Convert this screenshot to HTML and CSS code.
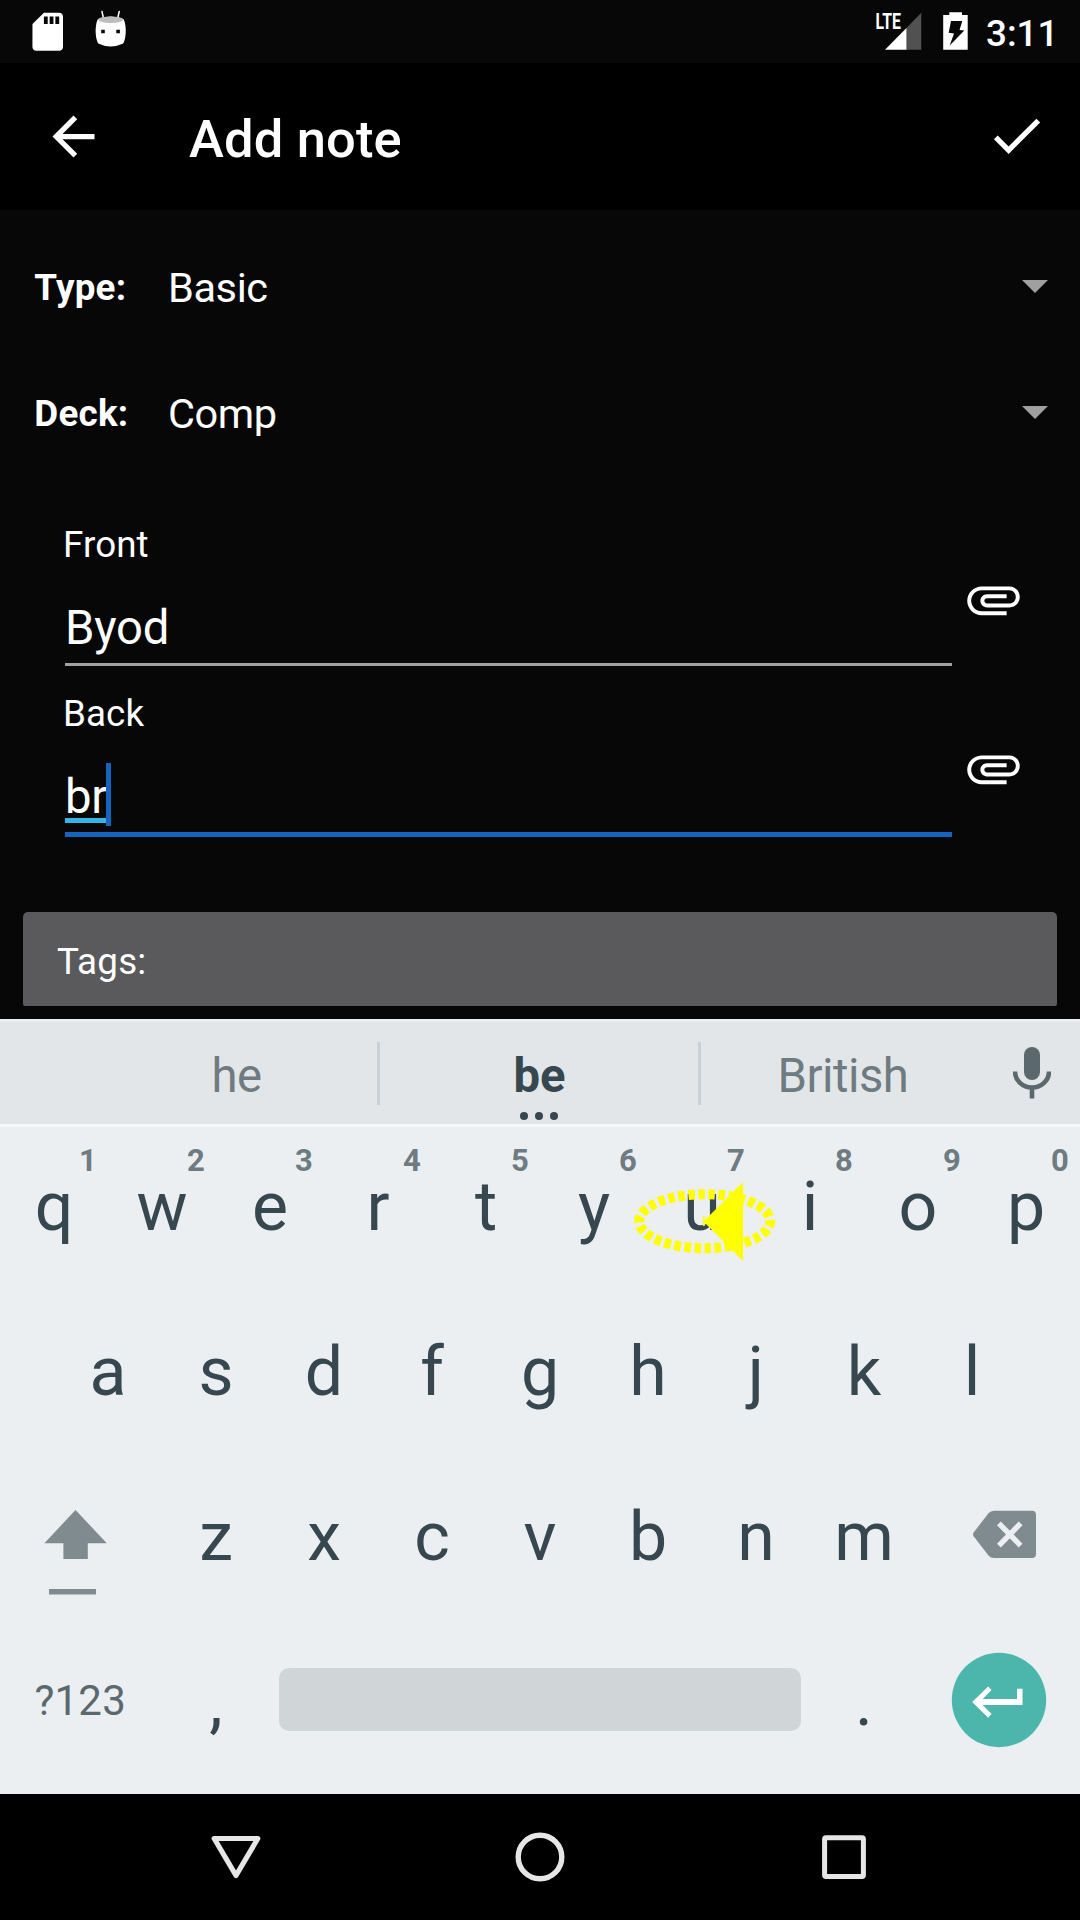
FILE: index.html
```html
<!DOCTYPE html>
<html lang="en">
<head>
<meta charset="utf-8">
<title>Add note</title>
<link rel="stylesheet" href="styles.css">
</head>
<body>
<header class="status">
  <svg class="status-left" width="140" height="63" viewBox="0 0 140 63">
    <path fill="#fff" transform="translate(24.8 8.9) scale(1.91 1.9)" d="M18 2h-8L4.02 8 4 20c0 1.1.9 2 2 2h12c1.1 0 2-.9 2-2V4c0-1.1-.9-2-2-2zm-6 6h-2V4h2v4zm3 0h-2V4h2v4zm3 0h-2V4h2v4z"/>
    <path d="M102 11.500l1.500 7M119.200 11.500l-1.500 7" stroke="#fff" stroke-width="1.500" stroke-linecap="round"/>
    <path fill="#fff" d="M98 19q12.700-5 25.400 0q2 3 2.400 11q0 9-2.600 13.500q-12.500 6-25 0q-2.600-4.500-2.600-13.500q.4-8 2.400-11z"/>
    <ellipse cx="110.700" cy="19.700" rx="12.300" ry="3.300" fill="#bdbdbd"/>
    <path fill="#070707" d="M101.200 29.700h3.600v3.600h-3.600zM116.300 29.700h3.600v3.600h-3.600z"/>
  </svg>
  <div class="status-right">
    <svg width="96" height="63" viewBox="874 0 96 63">
      <text class="lte" x="875.500" y="29.200" textLength="25.500" lengthAdjust="spacingAndGlyphs">LTE</text>
      <path fill="#fff" d="M885 49.700L906.700 27.700V49.700z"/>
      <path fill="#515151" d="M906.700 27.700L921.300 12.700V49.700H906.700z"/>
      <path fill="#fff" d="M943.200 15H949.300V12.300H962V15H967.700V49.700H943.200z"/>
      <path fill="#070707" d="M951 21H962.300L959.500 30L964.300 30.400L949.700 45.600L954 33.600L948.700 32.800z"/>
    </svg>
    <span class="time">3:11</span>
  </div>
</header>

<nav class="appbar">
  <svg width="63" height="63" viewBox="0 0 24 24"><path fill="#fff" d="M20 11H7.830l5.590-5.590L12 4l-8 8 8 8 1.410-1.410L7.830 13H20v-2z"/></svg>
  <h1 class="title">Add note</h1>
  <svg class="check" width="63" height="63" viewBox="0 0 24 24"><path fill="#fff" d="M9 16.170L4.830 12l-1.420 1.410L9 19 21 7l-1.410-1.410z"/></svg>
</nav>

<main class="form">
  <div class="spinner">
    <span class="spinner-label">Type:</span>
    <span class="spinner-value">Basic</span>
    <svg width="26" height="13" viewBox="0 0 26 13"><path fill="#a0a0a0" d="M0 0h26L13 13z"/></svg>
  </div>
  <div class="spinner">
    <span class="spinner-label">Deck:</span>
    <span class="spinner-value">Comp</span>
    <svg width="26" height="13" viewBox="0 0 26 13"><path fill="#a0a0a0" d="M0 0h26L13 13z"/></svg>
  </div>
  <section class="fields">
    <div class="field">
      <div class="field-main">
        <div class="field-label">Front</div>
        <div class="input">Byod</div>
      </div>
      <svg class="clip" width="63" height="63" viewBox="0 0 24 24"><path fill="#fff" d="M7.500 18C4.460 18 2 15.540 2 12.500S4.460 7 7.500 7H18c2.210 0 4 1.790 4 4s-1.790 4-4 4H9.500C8.120 15 7 13.880 7 12.500S8.120 10 9.500 10H17v1.500H9.500c-.55 0-1 .45-1 1s.45 1 1 1H18c1.380 0 2.500-1.120 2.500-2.500S19.380 8.500 18 8.500H7.500c-2.210 0-4 1.790-4 4s1.790 4 4 4H17V18H7.500z"/></svg>
    </div>
    <div class="field">
      <div class="field-main">
        <div class="field-label">Back</div>
        <div class="input focused"><span class="composing">br</span></div>
      </div>
      <svg class="clip" width="63" height="63" viewBox="0 0 24 24"><path fill="#fff" d="M7.500 18C4.460 18 2 15.540 2 12.500S4.460 7 7.500 7H18c2.210 0 4 1.790 4 4s-1.790 4-4 4H9.500C8.120 15 7 13.880 7 12.500S8.120 10 9.500 10H17v1.500H9.500c-.55 0-1 .45-1 1s.45 1 1 1H18c1.380 0 2.500-1.120 2.500-2.500S19.380 8.500 18 8.500H7.500c-2.210 0-4 1.790-4 4s1.790 4 4 4H17V18H7.500z"/></svg>
    </div>
  </section>
  <div class="tags">Tags:</div>
</main>

<section class="suggestions">
  <span class="suggestion">he</span>
  <i class="divider"></i>
  <span class="suggestion primary">be<svg class="more" width="40" height="10" viewBox="0 0 40 10"><g fill="#37474f"><circle cx="5" cy="5" r="4"/><circle cx="20" cy="5" r="4"/><circle cx="35" cy="5" r="4"/></g></svg></span>
  <i class="divider"></i>
  <span class="suggestion">British</span>
  <svg class="mic" width="38" height="52" viewBox="0 0 38 52"><rect x="11" y="0" width="16" height="33" rx="8" fill="#5b696f"/><path d="M2 24.500a17 16 0 0 0 34 0M19 41v10.500" fill="none" stroke="#5b696f" stroke-width="4.600"/></svg>
</section>

<section class="keyboard">
  <div class="row">
    <span class="key">q<sup class="hint">1</sup></span><span class="key">w<sup class="hint">2</sup></span><span class="key">e<sup class="hint">3</sup></span><span class="key">r<sup class="hint">4</sup></span><span class="key">t<sup class="hint">5</sup></span><span class="key">y<sup class="hint">6</sup></span><span class="key">u<sup class="hint">7</sup>
      <svg class="pointer" width="144" height="84" viewBox="632 1180 144 84"><ellipse cx="704.700" cy="1221.200" rx="65.500" ry="27" pathLength="300" fill="none" stroke="#ff0" stroke-width="10" stroke-dasharray="6.500 3.500" stroke-dashoffset="1.300"/><path fill="#ff0" d="M743 1182V1261L703.500 1221.500zM703 1216h1.700v10h-1.700z"/></svg></span><span class="key">i<sup class="hint">8</sup></span><span class="key">o<sup class="hint">9</sup></span><span class="key">p<sup class="hint">0</sup></span>
  </div>
  <div class="row">
    <span class="key">a</span><span class="key">s</span><span class="key">d</span><span class="key">f</span><span class="key">g</span><span class="key">h</span><span class="key">j</span><span class="key">k</span><span class="key">l</span>
  </div>
  <div class="row">
    <svg class="wide" width="162" height="165" viewBox="0 1457 162 165"><path fill="#808b8f" d="M75.500 1510L106.800 1543.200H87.800V1559H63.400V1543.200H44.400zM49 1589H96V1594.600H49z"/></svg>
    <span class="key">z</span><span class="key">x</span><span class="key">c</span><span class="key">v</span><span class="key">b</span><span class="key">n</span><span class="key">m</span>
    <svg class="wide" width="162" height="165" viewBox="918 1457 162 165"><path fill="#808b8f" d="M994 1510.700H1032Q1036 1510.700 1036 1515V1553.700Q1036 1558 1032 1558H994Q990.500 1558 988.500 1555.500L973.800 1536.500Q972.300 1534.400 973.800 1532.300L988.500 1513.200Q990.500 1510.700 994 1510.700z"/><path d="M998.900 1523.400L1020.600 1545.600M1020.600 1523.400L998.900 1545.600" stroke="#ebeff2" stroke-width="5.400"/></svg>
  </div>
  <div class="row">
    <span class="symbols">?123</span>
    <span class="key">,</span>
    <span class="space"></span>
    <span class="key">.</span>
    <svg class="wide" width="162" height="165" viewBox="918 1622 162 165"><ellipse cx="999" cy="1700" rx="47.200" ry="47.200" fill="#4db6ac"/><path fill="#fff" d="M1017 1688.700H1022.500V1705H982.700L991.600 1714L988.200 1717.700L972.200 1702L988.200 1686.500L991.600 1690L982.700 1699H1017z"/></svg>
  </div>
</section>

<footer class="navbar">
  <svg width="50" height="50" viewBox="211 1832 50 50"><path d="M214.200 1838.500H257.800L236 1875.500z" fill="none" stroke="#e6e6e6" stroke-width="5.200" stroke-linejoin="round"/></svg>
  <svg width="50" height="50" viewBox="515 1832 50 50"><circle cx="540" cy="1857" r="21.800" fill="none" stroke="#e6e6e6" stroke-width="5.400"/></svg>
  <svg width="50" height="50" viewBox="819 1832 50 50"><rect x="824.600" y="1837.800" width="38.800" height="38.600" rx="1.500" fill="none" stroke="#e6e6e6" stroke-width="5"/></svg>
</footer>
</body>
</html>
```
FILE: styles.css
```css
* { box-sizing: border-box; }
body {
  margin: 0;
  width: 1080px;
  height: 1920px;
  display: flex;
  flex-direction: column;
  overflow: hidden;
  background: #070707;
  color: #fff;
  font-family: Roboto, sans-serif;
}
svg { display: block; flex: none; }

.status { height: 63px; display: flex; justify-content: space-between; background: #070707; }
.status-right { display: flex; padding-right: 19px; }
.lte { font: 700 22.500px Roboto, sans-serif; fill: #fff; }
.time { width: 91px; padding-left: 16px; font-size: 36.750px; font-weight: 500; line-height: 67px; white-space: nowrap; }

.appbar { height: 147px; display: flex; align-items: center; background: #000; padding: 0 32px 0 42px; }
.title { flex: 1; margin: 0; padding: 5px 0 0 84px; font-size: 52.500px; font-weight: 500; line-height: 62px; letter-spacing: .15px; }
.check { margin-bottom: 2px; }

.form { height: 809px; padding-top: 14px; }
.spinner { height: 126px; display: flex; align-items: center; padding: 0 32px 0 34.300px; }
.spinner-label { width: 133.700px; font-size: 36.750px; font-weight: 700; letter-spacing: .25px; }
.spinner-value { flex: 1; font-size: 41.500px; letter-spacing: -.4px; }
.spinner svg { margin-bottom: 1px; }

.fields { padding: 46px 0 0 65px; }
.field { height: 169px; display: flex; }
.field-main { width: 887px; }
.field-label { height: 74px; margin-left: -2px; font-size: 36.750px; line-height: 46px; letter-spacing: .1px; }
.input { position: relative; height: 69px; font-size: 47.250px; line-height: 65px; letter-spacing: -.2px; }
.input::after { content: ""; display: block; height: 2.600px; margin-top: 2px; background: #a1a1a1; }
.input.focused::after { height: 5px; margin-top: 4px; background: #1565c0; }
.composing { display: block; position: relative; width: 46px; height: 63px; }
.composing::before { content: ""; position: absolute; left: 0; top: 53px; width: 42px; height: 5px; background: #33b5e5; }
.composing::after { content: ""; position: absolute; left: 41px; top: -2px; width: 5px; height: 63px; background: #1565c0; }
.clip { margin: 46px 0 0 9.700px; }

.tags {
  height: 94px;
  margin: 52px 23px 0;
  padding: 4px 0 0 34px;
  border-radius: 5px 5px 2px 2px;
  background: #5a5a5c;
  font-size: 36.750px;
  line-height: 92px;
  letter-spacing: .2px;
}

.suggestions {
  height: 108px;
  display: flex;
  align-items: center;
  padding-left: 96px;
  border-top: 3px solid #eceff1;
  border-bottom: 3px solid #f5f8fa;
  background: #e2e6e9;
  color: #6e7b81;
  font-size: 47.250px;
}
.suggestion { position: relative; flex: none; width: 281px; padding-top: 6px; text-align: center; letter-spacing: -.5px; }
.suggestion.primary { width: 318px; padding-left: 1px; color: #37474f; font-weight: 700; letter-spacing: 0; }
.more { position: absolute; left: 139px; top: 69px; }
.divider { width: 3px; height: 63px; background: #cad0d3; }
.suggestion:nth-of-type(3) { width: 284px; }
.mic { margin-left: 28px; }

.keyboard { height: 667px; background: #ebeff2; color: #37474f; }
.row { height: 165px; display: flex; justify-content: center; }
.key { position: relative; width: 108px; text-align: center; font-size: 68px; line-height: 160px; }
.hint { position: absolute; right: 0; top: 14px; width: 40px; font-size: 31px; font-weight: 700; line-height: 40px; color: #6e7b81; }
.pointer { position: absolute; left: -16px; top: 53px; z-index: 1; }
.symbols { width: 162px; padding-left: 34.500px; font-size: 42px; line-height: 157px; letter-spacing: .2px; color: #5b696f; }
.space { width: 522px; height: 63px; margin: 46px 9px 0 9px; border-radius: 10px; background: #d0d5d8; }
.row:last-child { justify-content: flex-start; }
.row:last-child .space { margin: 46px 9px 0; }

.navbar { height: 126px; display: flex; align-items: center; justify-content: center; gap: 254px; background: #000; }
```
